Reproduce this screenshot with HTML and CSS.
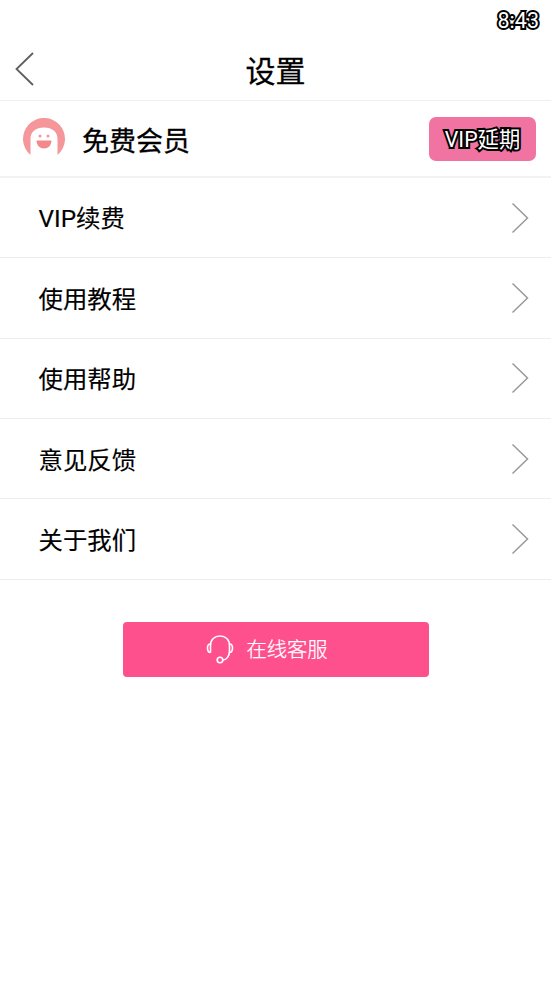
FILE: index.html
```html
<!DOCTYPE html>
<html lang="zh-CN">
<head>
<meta charset="utf-8">
<title>设置</title>
<link rel="stylesheet" href="styles.css">
</head>
<body>
<div class="status"><span class="outlined">8:43</span></div>
<header class="header">
  <svg class="back" width="22" height="36" viewBox="0 0 22 36"><path d="M19 2 2.500 18 19 34"/></svg>
  <h1>设置</h1>
</header>
<section class="member">
  <svg class="avatar" width="44" height="44" viewBox="0 0 44 44">
    <path class="hair" d="M8.500 37A21 21 0 1 1 35.500 37V21C35.500 13.500 30 9.500 22 9.500S8.500 13.500 8.500 21Z"/>
    <circle class="hair" cx="18" cy="18" r="1.500"/><circle class="hair" cx="26" cy="18" r="1.500"/>
    <path class="mouth" d="M14.500 22.500H29.500C29.500 27.500 26 30.500 22 30.500S14.500 27.500 14.500 22.500Z"/>
  </svg>
  <span class="name">免费会员</span>
  <button class="extend"><span class="outlined">VIP延期</span></button>
</section>
<nav class="menu">
  <a class="row"><span>VIP续费</span><svg class="arrow" width="20" height="32" viewBox="0 0 20 32"><path d="M2.500 1.500 17.500 16 2.500 30.500"/></svg></a>
  <a class="row"><span>使用教程</span><svg class="arrow" width="20" height="32" viewBox="0 0 20 32"><path d="M2.500 1.500 17.500 16 2.500 30.500"/></svg></a>
  <a class="row"><span>使用帮助</span><svg class="arrow" width="20" height="32" viewBox="0 0 20 32"><path d="M2.500 1.500 17.500 16 2.500 30.500"/></svg></a>
  <a class="row"><span>意见反馈</span><svg class="arrow" width="20" height="32" viewBox="0 0 20 32"><path d="M2.500 1.500 17.500 16 2.500 30.500"/></svg></a>
  <a class="row"><span>关于我们</span><svg class="arrow" width="20" height="32" viewBox="0 0 20 32"><path d="M2.500 1.500 17.500 16 2.500 30.500"/></svg></a>
</nav>
<button class="service">
  <svg class="headset" width="28" height="30" viewBox="0 0 28 30">
    <path d="M4.500 18.500V11.500C4.500 5.500 8.500 2 14 2S23.500 5.500 23.500 11.500V17C23.500 22 20.500 26 17 26"/>
    <path d="M4.500 10C2.500 10 1.500 11.500 1.500 14S2.500 18.500 4.500 18.500M23.500 10C25.500 10 26.500 11.500 26.500 14S25.500 18.500 23.500 18.500"/>
    <circle cx="14" cy="26" r="2.800"/>
  </svg>
  <span>在线客服</span>
</button>
</body>
</html>
```

FILE: styles.css
```css
* { box-sizing: border-box; }
body {
  margin: 0;
  height: 981px;
  background: #fff;
  color: #000;
  font-family: Roboto, "Noto Sans CJK SC", sans-serif;
  overflow: hidden;
}
button { border: 0; padding: 0; font-family: inherit; }
svg { display: block; flex: none; fill: none; }
.status {
  height: 40px;
  padding-right: 12px;
  display: flex;
  align-items: center;
  justify-content: flex-end;
  font-size: 21.5px;
}
.outlined {
  color: #fff;
  -webkit-text-stroke: 4px #000;
  paint-order: stroke fill;
  stroke-linejoin: round;
}
.header {
  height: 61px;
  border-bottom: 1px solid #efefef;
  display: grid;
  grid-template-columns: 60px 1fr 60px;
  align-items: center;
}
.back { margin: -5px 0 0 14px; stroke: #5e5e5e; stroke-width: 1.8; }
h1 {
  margin: 0;
  padding-top: 2px;
  text-align: center;
  font-size: 30px;
  font-weight: 400;
  line-height: 60px;
  -webkit-text-stroke: 0.3px #000;
}
.member {
  height: 77px;
  padding: 0 15px 0 22px;
  border-bottom: 2px solid #f2f2f2;
  display: flex;
  align-items: center;
}
.avatar { margin-top: 2px; }
.name {
  margin-left: 16px;
  padding-top: 1px;
  font-size: 27px;
  -webkit-text-stroke: 0.3px #000;
}
.hair { fill: #f5979a; }
.mouth { fill: #f3898c; }
.extend {
  margin-left: auto;
  width: 107px;
  height: 44px;
  padding-bottom: 2px;
  border-radius: 7px;
  background: #f073a1;
  font-size: 21.3px;
}
.row {
  height: 80.35px;
  padding: 0 21px 0 38.5px;
  border-bottom: 1px solid #ededed;
  display: flex;
  align-items: center;
  justify-content: space-between;
  font-size: 24.4px;
}
.row span { padding-bottom: 1.4px; -webkit-text-stroke: 0.15px #000; }
.arrow { stroke: #999; stroke-width: 1.5; }
.service {
  margin: 42px auto 0;
  width: 306px;
  height: 55px;
  border-radius: 4px;
  background: #ff508e;
  color: #fff;
  display: flex;
  align-items: center;
  justify-content: center;
  gap: 12px;
  padding-right: 17px;
  font-size: 20.3px;
  font-weight: 300;
}
.service span { padding-bottom: 2px; -webkit-text-stroke: 0.25px #fff; }
.headset { stroke: #fff; stroke-width: 1.6; }
```
